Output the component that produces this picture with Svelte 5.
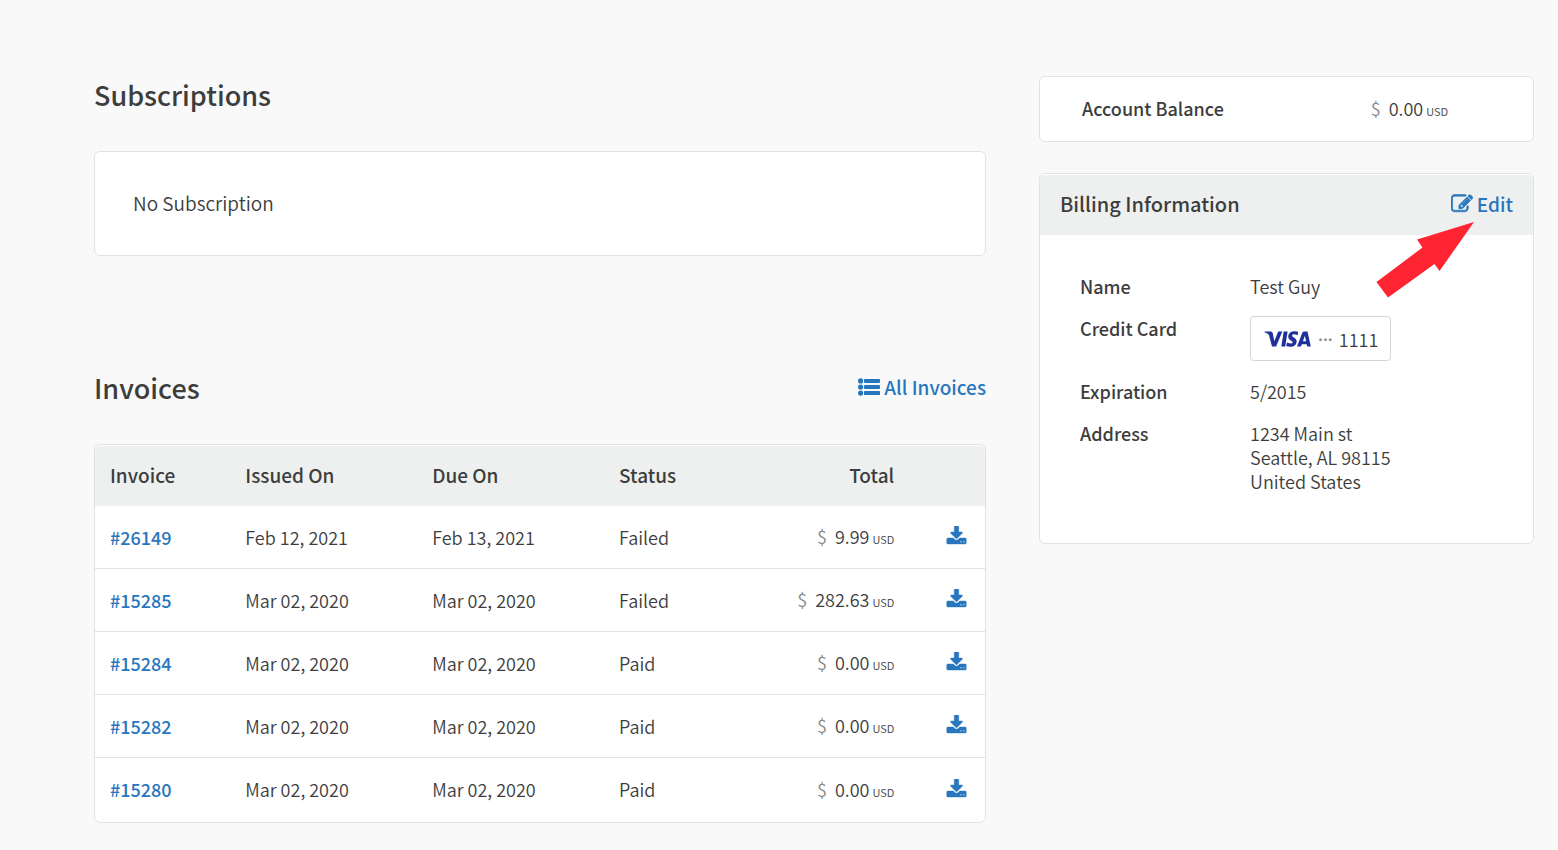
<script lang="ts">
  interface Invoice {
    number: string;
    issued: string;
    due: string;
    status: string;
    total: string;
  }

  const invoices: Invoice[] = [
    { number: '26149', issued: 'Feb 12, 2021', due: 'Feb 13, 2021', status: 'Failed', total: '9.99' },
    { number: '15285', issued: 'Mar 02, 2020', due: 'Mar 02, 2020', status: 'Failed', total: '282.63' },
    { number: '15284', issued: 'Mar 02, 2020', due: 'Mar 02, 2020', status: 'Paid', total: '0.00' },
    { number: '15282', issued: 'Mar 02, 2020', due: 'Mar 02, 2020', status: 'Paid', total: '0.00' },
    { number: '15280', issued: 'Mar 02, 2020', due: 'Mar 02, 2020', status: 'Paid', total: '0.00' }
  ];

  const billing = {
    name: 'Test Guy',
    lastFour: '1111',
    expiration: '5/2015',
    address: ['1234 Main st', 'Seattle, AL 98115', 'United States']
  };
</script>

{#snippet money(amount: string)}
  <span class="money"><span class="symbol">$</span>{amount}<span class="currency">USD</span></span>
{/snippet}

<div class="page">
  <main>
    <section class="subscriptions">
      <h1>Subscriptions</h1>
      <div class="card empty">No Subscription</div>
    </section>

    <section>
      <header class="section-header">
        <h1>Invoices</h1>
        <a href="#invoices" class="all-link">
          <svg width="22" height="18" viewBox="0 0 22 18" fill="currentColor" aria-hidden="true">
            <circle cx="2.6" cy="2.9" r="2.6" />
            <circle cx="2.6" cy="9" r="2.6" />
            <circle cx="2.6" cy="15.1" r="2.6" />
            <rect x="6" y="0.9" width="16" height="4" rx="0.8" />
            <rect x="6" y="7" width="16" height="4" rx="0.8" />
            <rect x="6" y="13.1" width="16" height="4" rx="0.8" />
          </svg>
          All Invoices
        </a>
      </header>

      <div class="card table-card">
        <table>
          <thead>
            <tr>
              <th class="col-number">Invoice</th>
              <th class="col-date">Issued On</th>
              <th class="col-date">Due On</th>
              <th class="col-status">Status</th>
              <th class="total">Total</th>
              <th class="col-download" aria-label="Download"></th>
            </tr>
          </thead>
          <tbody>
            {#each invoices as invoice}
              <tr>
                <td><a href={`#invoice-${invoice.number}`}>#{invoice.number}</a></td>
                <td>{invoice.issued}</td>
                <td>{invoice.due}</td>
                <td>{invoice.status}</td>
                <td class="total">{@render money(invoice.total)}</td>
                <td class="download">
                  <a href={`#download-${invoice.number}`} aria-label={`Download invoice ${invoice.number}`}>
                    <svg width="21" height="21" viewBox="0 0 1792 1792" fill="currentColor" stroke="currentColor" stroke-width="36">
                      <path d="M1344 1344q0-26-19-45t-45-19-45 19-19 45 19 45 45 19 45-19 19-45zm256 0q0-26-19-45t-45-19-45 19-19 45 19 45 45 19 45-19 19-45zm128-224v320q0 40-28 68t-68 28h-1472q-40 0-68-28t-28-68v-320q0-40 28-68t68-28h465l135 136q58 56 136 56t136-56l136-136h464q40 0 68 28t28 68zm-325-569q17 41-14 70l-448 448q-18 19-45 19t-45-19l-448-448q-31-29-14-70 17-39 59-39h256v-448q0-26 19-45t45-19h256q26 0 45 19t19 45v448h256q42 0 59 39z" />
                    </svg>
                  </a>
                </td>
              </tr>
            {/each}
          </tbody>
        </table>
      </div>
    </section>
  </main>

  <aside>
    <section class="card balance">
      <span class="label">Account Balance</span>
      {@render money('0.00')}
    </section>

    <section class="card billing">
      <header class="billing-header">
        <h2>Billing Information</h2>
        <a href="#edit-billing">
          <svg width="22" height="22" viewBox="0 0 1792 1792" fill="currentColor" stroke="currentColor" stroke-width="50" aria-hidden="true">
            <path d="M888 1184l116-116-152-152-116 116v56h96v96h56zm440-720q-16-16-33 1l-350 350q-17 17-1 33t33-1l350-350q17-17 1-33zm80 594v190q0 119-84.5 203.5t-203.5 84.5h-832q-119 0-203.5-84.5t-84.5-203.5v-832q0-119 84.5-203.5t203.5-84.5h832q63 0 117 25 15 7 18 23 3 17-9 29l-49 49q-14 14-32 8-23-6-45-6h-832q-66 0-113 47t-47 113v832q0 66 47 113t113 47h832q66 0 113-47t47-113v-126q0-13 9-22l64-64q15-15 35-7t20 29zm-96-738l288 288-672 672h-288v-288zm444 132l-92 92-288-288 92-92q28-28 68-28t68 28l152 152q28 28 28 68t-28 68z" />
          </svg>
          Edit
        </a>
        <svg class="pointer" width="100" height="78" viewBox="0 0 100 78" aria-hidden="true">
          <path d="M98 1L41 18.500 46.500 26.500 0.500 61 12 76.500 58.500 43 63.500 50z" fill="#ff2431" />
        </svg>
      </header>

      <dl>
        <dt>Name</dt>
        <dd>{billing.name}</dd>
        <dt>Credit Card</dt>
        <dd>
          <span class="credit-card">
            <svg width="48" height="16" viewBox="0 0 48 16" fill="#20309a" role="img" aria-label="Visa">
              <path d="M0.500 0.500H6.800Q8.300 0.500 8.700 2L10.300 10.200 14.200 0.500H18.300L12.100 15.500H8L4.900 3.700Q3.200 2 0.500 1.200z" />
              <path d="M19.700 0.500H23.600L21.200 15.500H17.300z" />
              <path d="M34.200 0.800L33.600 4.200Q28.600 2.200 28.100 4.600C28 6.300 33.200 6.600 32.600 10.900C31.900 15.900 26.300 16.400 22.200 14.900L22.900 11.500Q28.300 13.800 28.700 11.200C28.900 9.400 23.600 9.100 24.300 4.900C25 .2 30.500-.5 34.200.8z" />
              <path fill-rule="evenodd" d="M39.800 0.500H43.500L46.800 15.500H43.200L42.700 13.300H37.800L37 15.500H33L38.200 2Q38.700 0.600 39.800 0.500zM40.900 4.700L38.900 10.200H42.100z" />
            </svg>
            <span class="dots">···</span>
            {billing.lastFour}
          </span>
        </dd>
        <dt>Expiration</dt>
        <dd>{billing.expiration}</dd>
        <dt>Address</dt>
        <dd>
          {#each billing.address as line}
            <div>{line}</div>
          {/each}
        </dd>
      </dl>
    </section>
  </aside>
</div>

<style>
  :global(body) {
    background: #f9f9f9;
  }

  .page {
    display: grid;
    grid-template-columns: 892fr 495fr;
    align-items: start;
    gap: 53px;
    padding: 76px 24px 24px 94px;
    color: #3d3d3d;
    font-family: 'Noto Sans CJK SC', 'Noto Sans', sans-serif;
    font-size: 18px;
    font-weight: 350;
    line-height: 24px;
  }

  h1, h2 {
    margin: 0;
    font-weight: 500;
  }

  h1 {
    font-size: 27px;
    line-height: 38px;
  }

  h2 {
    font-size: 20px;
    line-height: 28px;
  }

  a {
    color: #2876bd;
    font-weight: 500;
    text-decoration: none;
  }

  svg {
    display: block;
    flex-shrink: 0;
  }

  .card {
    background: #fff;
    border: 1px solid #e1e3e3;
    border-radius: 6px;
  }

  .subscriptions {
    margin-bottom: 113px;
  }

  .empty {
    margin-top: 37px;
    padding: 39px 38px 40px;
    font-size: 19px;
  }

  .section-header {
    display: flex;
    justify-content: space-between;
    align-items: center;
  }

  .all-link {
    display: flex;
    align-items: center;
    gap: 4px;
    padding-bottom: 2px;
    font-size: 19px;
  }

  .table-card {
    margin-top: 37px;
    padding: 1px 0;
  }

  table {
    width: 100%;
    table-layout: fixed;
    border-spacing: 0;
  }

  th, td {
    box-sizing: border-box;
    height: 63px;
    padding: 0 0 1px 15px;
    text-align: left;
  }

  th {
    height: 60px;
    padding-bottom: 2px;
    background: #eef0f0;
    font-size: 19px;
    font-weight: 500;
  }

  th:first-child {
    border-top-left-radius: 5px;
  }

  th:last-child {
    border-top-right-radius: 5px;
  }

  td {
    border-bottom: 1px solid #e1e3e3;
  }

  tr:last-child td {
    border-bottom: none;
  }

  .col-number {
    width: 15.2%;
  }

  .col-date {
    width: 21%;
  }

  .col-status {
    width: 16%;
  }

  .col-download {
    width: 10.2%;
  }

  .total {
    padding-bottom: 2px;
    text-align: right;
  }

  .download a {
    display: flex;
    justify-content: flex-end;
    padding-right: 18px;
  }

  .money {
    white-space: nowrap;
  }

  .symbol {
    margin-right: 8px;
    color: #888;
  }

  .currency {
    margin-left: 3px;
    font-size: 11px;
    line-height: 1;
  }

  .label, dt {
    font-weight: 500;
  }

  .balance {
    display: flex;
    justify-content: space-between;
    padding: 19px 85px 21px 42px;
  }

  .billing {
    margin-top: 31px;
    padding-top: 1px;
  }

  .billing-header {
    position: relative;
    display: flex;
    justify-content: space-between;
    align-items: center;
    padding: 15px 20px 17px;
    background: #eef0f0;
    border-radius: 5px 5px 0 0;
  }

  .billing-header a {
    display: flex;
    align-items: center;
    gap: 4px;
    font-size: 19px;
  }

  /* arrow pointing at the edit link */
  .pointer {
    position: absolute;
    top: 46px;
    right: 57px;
  }

  dl {
    display: grid;
    grid-template-columns: 170px 1fr;
    row-gap: 18px;
    margin: 0;
    padding: 39px 40px 50px;
  }

  dd {
    margin: 0;
  }

  .credit-card {
    display: inline-flex;
    align-items: center;
    padding: 10px 12px 9px 13px;
    border: 1px solid #d5d5d5;
    border-radius: 4px;
    vertical-align: top;
  }

  .dots {
    margin: 0 6px;
    color: #888;
    font-family: 'Open Sans', sans-serif;
    font-weight: 600;
  }
</style>
